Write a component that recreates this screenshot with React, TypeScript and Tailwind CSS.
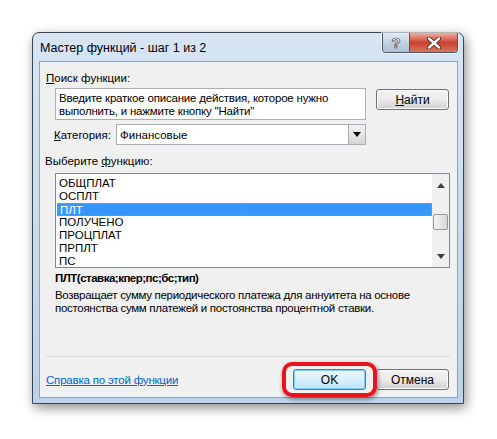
// Мастер функций — диалог Excel (Windows 7 Aero)

const ITEMS = ['ОБЩПЛАТ', 'ОСПЛТ', 'ПЛТ', 'ПОЛУЧЕНО', 'ПРОЦПЛАТ', 'ПРПЛТ', 'ПС']

const FONT = { fontFamily: '"Liberation Sans", Arial, sans-serif' }

// ── Caption buttons ───────────────────────────────────────────────────────────

function CaptionButtons() {
  return (
    <div className="flex h-[20px] overflow-hidden rounded-b-[4px] border border-t-0 border-[#4a5868] shadow-[0_0_0_1px_rgba(255,255,255,0.6)]">
      <div className="flex w-[27px] items-center justify-center border-r border-[#4a5868] bg-gradient-to-b from-[#e3ecf5] via-[#c4d3e3] to-[#aebfd2]">
        <span
          className="text-[15px] font-bold leading-none text-white"
          style={{ ...FONT, WebkitTextStroke: '0.7px #3a4656' }}
        >
          ?
        </span>
      </div>
      <div className="flex w-[47px] items-center justify-center bg-gradient-to-b from-[#eab0a4] via-[#c8402f] to-[#d9735c]">
        <svg width="14" height="12" viewBox="0 0 14 12">
          <path d="M2 1.5 L12 10.5 M12 1.5 L2 10.5" stroke="#4a2420" strokeWidth="4.2" strokeLinecap="round" />
          <path d="M2 1.5 L12 10.5 M12 1.5 L2 10.5" stroke="#ffffff" strokeWidth="2.4" strokeLinecap="round" />
        </svg>
      </div>
    </div>
  )
}

// ── Push button ───────────────────────────────────────────────────────────────

function PushButton({ label, focused, underline }: { label: string; focused?: boolean; underline?: number }) {
  return (
    <div
      className={`flex h-[21px] w-[73px] items-center justify-center rounded-[3px] border text-[12px] text-black ${
        focused
          ? 'border-[#3c7fb1] bg-gradient-to-b from-[#eaf6fd] via-[#d9f0fc] to-[#bee6fd] shadow-[inset_0_0_0_1px_#7fd0f5]'
          : 'border-[#707070] bg-gradient-to-b from-[#f2f2f2] via-[#ebebeb] to-[#cfcfcf] shadow-[inset_0_0_0_1px_#fcfcfc]'
      }`}
    >
      {underline === undefined ? (
        label
      ) : (
        <span>
          {label.slice(0, underline)}
          <span className="underline">{label[underline]}</span>
          {label.slice(underline + 1)}
        </span>
      )}
    </div>
  )
}

// ── Function list ─────────────────────────────────────────────────────────────

function FunctionList() {
  return (
    <div className="ml-[15px] mt-[5px] flex h-[95px] w-[395px] border border-[#828790] bg-white">
      <div className="flex-1 pl-[1px] pt-[3px]">
        {ITEMS.map((item) => (
          <div
            key={item}
            className={`h-[13px] pl-[2px] text-[11.5px] leading-[13px] ${
              item === 'ПЛТ' ? 'border border-dotted border-[#d98a2b] bg-[#3399ff] pl-[1px] leading-[11px] text-white' : 'text-black'
            }`}
          >
            {item}
          </div>
        ))}
      </div>
      <div className="flex w-[17px] flex-col items-center bg-[#f0f0f0]">
        <svg className="mt-[9px]" width="8" height="5" viewBox="0 0 8 5">
          <path d="M0 5 L4 0 L8 5 Z" fill="#404040" />
        </svg>
        <div className="mt-[26px] h-[16px] w-[15px] rounded-[2px] border border-[#979797] bg-gradient-to-r from-[#f4f4f4] to-[#d8d8d8]" />
        <div className="flex-1" />
        <svg className="mb-[8px]" width="8" height="5" viewBox="0 0 8 5">
          <path d="M0 0 L8 0 L4 5 Z" fill="#404040" />
        </svg>
      </div>
    </div>
  )
}

// ── Dialog ────────────────────────────────────────────────────────────────────

export default function App() {
  return (
    <div className="h-[439px] w-[497px] overflow-hidden bg-white pl-[32px] pt-[32px]" style={FONT}>
      <div className="flex h-[372px] w-[432px] flex-col rounded-t-[7px] border border-[#3b4452] bg-gradient-to-b from-[#d7e5f3] via-[#cadcee] to-[#bcd2ea] shadow-[2px_4px_12px_rgba(0,0,0,0.45)]">
        {/* Title bar */}
        <div className="flex h-[28px] shrink-0 items-start justify-between">
          <span className="ml-[7px] mt-[8px] text-[12.5px] leading-[15px] text-black">
            Мастер функций - шаг 1 из 2
          </span>
          <div className="mr-[5px]">
            <CaptionButtons />
          </div>
        </div>

        {/* Client area */}
        <div className="mb-[5px] ml-[6px] mr-[5px] flex flex-1 flex-col border border-[#8ea3bd] bg-[#f0f0f0] text-[11.5px] leading-[14px] text-black">
          <div className="ml-[6px] mt-[9px]">
            <span className="underline">П</span>оиск функции:
          </div>

          <div className="mt-[3px] flex items-start">
            <div className="ml-[15px] h-[32px] w-[311px] border border-[#abadb3] bg-white px-[3px] pt-[3px] leading-[13px] tracking-[-0.2px]">
              Введите краткое описание действия, которое нужно
              <br />
              выполнить, и нажмите кнопку "Найти"
            </div>
            <div className="ml-[10px] mt-[1px]">
              <PushButton label="Найти" underline={0} />
            </div>
          </div>

          <div className="mt-[4px] flex items-center">
            <span className="ml-[14px] w-[62px]">
              <span className="underline">К</span>атегория:
            </span>
            <div className="flex h-[21px] w-[250px] items-center border border-[#abadb3] bg-white">
              <span className="flex-1 pl-[3px]">Финансовые</span>
              <div className="flex h-[19px] w-[17px] items-center justify-center border-l border-[#abadb3] bg-gradient-to-b from-[#f2f2f2] to-[#d6d6d6]">
                <svg width="8" height="5" viewBox="0 0 8 5">
                  <path d="M0 0 L8 0 L4 5 Z" fill="#000" />
                </svg>
              </div>
            </div>
          </div>

          <div className="ml-[5px] mt-[9px]">
            Выберите <span className="underline">ф</span>ункцию:
          </div>

          <FunctionList />

          <div className="ml-[15px] mt-[3px] font-bold tracking-[-0.5px]">ПЛТ(ставка;кпер;пс;бс;тип)</div>
          <div className="ml-[15px] mt-[4px] leading-[13px] tracking-[-0.3px]">
            Возвращает сумму периодического платежа для аннуитета на основе
            <br />
            постоянства сумм платежей и постоянства процентной ставки.
          </div>

          <div className="ml-[6px] mt-[41px] h-px w-[405px] bg-[#d5dfe5]" />

          <div className="mt-[12px] flex items-center">
            <span className="ml-[6px] tracking-[-0.2px] text-[#0066cc] underline">Справка по этой функции</span>
            <div className="flex-1" />
            <div className="relative mr-[10px]">
              <PushButton label="OK" focused />
              <div className="pointer-events-none absolute -inset-x-[11px] -inset-y-[7px] rounded-[10px] border-[4px] border-[#e8131c] shadow-[1px_2px_4px_rgba(0,0,0,0.45)]" />
            </div>
            <div className="mr-[8px]">
              <PushButton label="Отмена" />
            </div>
          </div>
        </div>
      </div>
    </div>
  )
}
